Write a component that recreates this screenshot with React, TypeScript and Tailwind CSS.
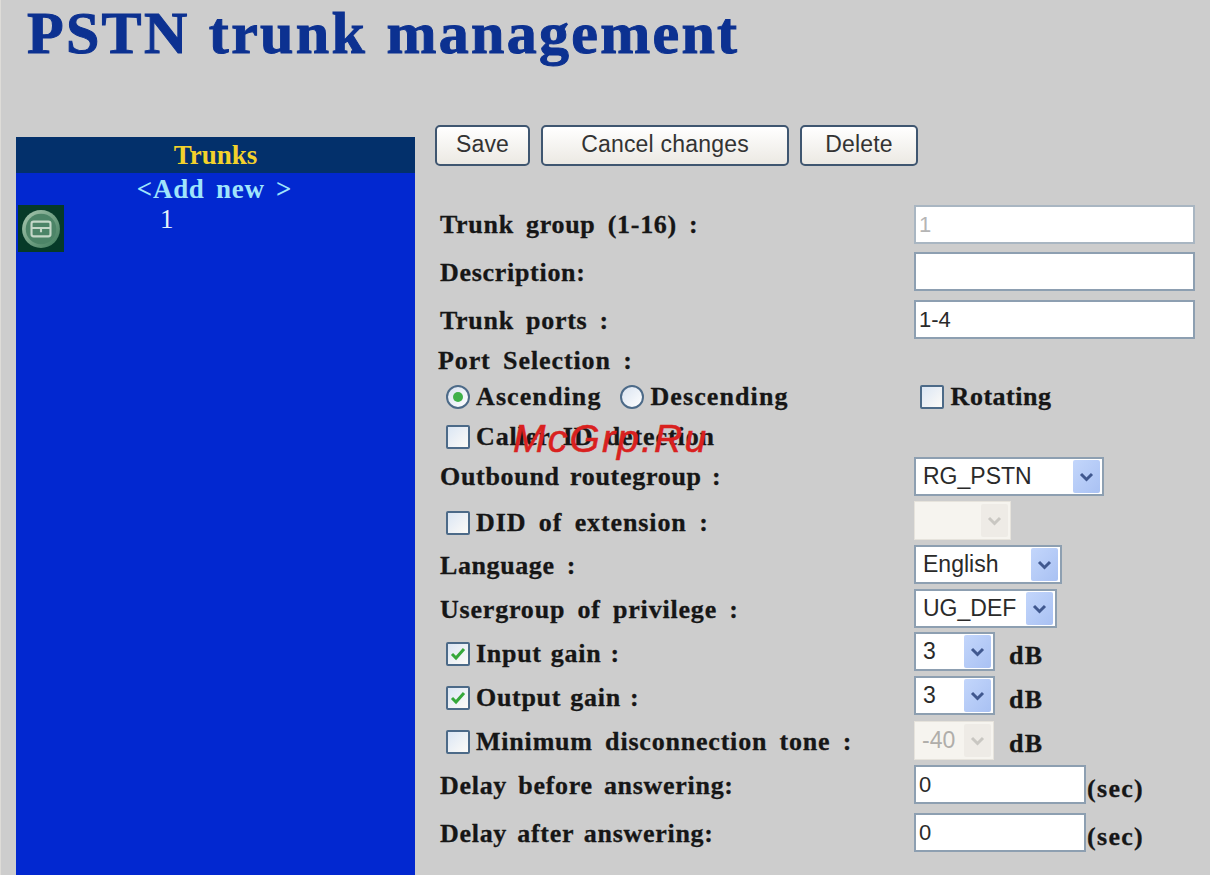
import React from "react";

const serif = "font-['Liberation_Serif',serif]";
const sans = "font-['Liberation_Sans',sans-serif]";
const base = `${serif} font-bold text-[26px] leading-[30px] text-[#161616] [-webkit-text-stroke:0.3px_#161616] whitespace-nowrap`;
const labelCls = `${base} tracking-[0.7px] [word-spacing:5px]`;
const wideCls = `${base} tracking-[1.1px] [word-spacing:5px]`;

function Arrow({ disabled }: { disabled?: boolean }) {
  return (
    <div className={`w-[27px] h-[33px] flex items-center justify-center rounded-[2px] ${disabled ? "bg-[#eeebe6]" : "bg-gradient-to-br from-[#c3d6fb] to-[#a9c1f3]"}`}>
      <svg width="15" height="10" viewBox="0 0 15 10" fill="none">
        <path d="M2 2 L7.5 7.5 L13 2" stroke={disabled ? "#c9c7c2" : "#40588f"} strokeWidth="3" />
      </svg>
    </div>
  );
}

function Select({ text, w, disabled }: { text: string; w: string; disabled?: boolean }) {
  return (
    <div className={`${w} h-[39px] flex items-center justify-between pr-[2px] pl-[7px] ${sans} text-[23px] ${disabled ? "bg-[#f6f4ef] text-[#b0aeaa] border border-[#e6e3dc]" : "bg-white text-[#2a2a2a] border-2 border-[#8d9fb1]"}`}>
      <span>{text}</span>
      <Arrow disabled={disabled} />
    </div>
  );
}

function Check({ checked }: { checked?: boolean }) {
  return (
    <span className="w-[24px] h-[24px] shrink-0 border-2 border-[#4c6a88] rounded-[2px] bg-gradient-to-br from-[#dbe6f4] to-[#fdfbf7] flex items-center justify-center">
      {checked && (
        <svg width="16" height="14" viewBox="0 0 16 14" fill="none">
          <path d="M2 7 L6 11 L14 2" stroke="#35a83a" strokeWidth="3" />
        </svg>
      )}
    </span>
  );
}

function Radio({ checked }: { checked?: boolean }) {
  return (
    <span className="w-[24px] h-[24px] shrink-0 rounded-full border-2 border-[#4c6a88] bg-gradient-to-br from-[#d9e3f0] to-[#ffffff] flex items-center justify-center">
      {checked && <span className="w-[10px] h-[10px] rounded-full bg-[#3fb14a]" />}
    </span>
  );
}

function Row({ h, label, indent, check, checked, children, labelTop = 0, cls }: {
  h: string; label: string; indent?: boolean; check?: boolean; checked?: boolean; children?: React.ReactNode; labelTop?: number; cls?: string;
}) {
  return (
    <div className={`flex items-start ${h}`}>
      <div className={`w-[479px] flex items-center gap-[6px] ${indent ? "pl-[11px]" : "pl-[5px]"}`} style={{ paddingTop: labelTop }}>
        {check && <Check checked={checked} />}
        <span className={cls ?? labelCls}>{label}</span>
      </div>
      {children}
    </div>
  );
}

function TextBox({ value, w, grey }: { value: string; w: string; grey?: boolean }) {
  return (
    <div className={`${w} h-[39px] bg-white border-2 ${grey ? "border-[#a9b6c2] text-[#b5b5b5]" : "border-[#8d9fb1] text-[#2a2a2a]"} pl-[3px] flex items-center ${sans} text-[22px]`}>
      {value}
    </div>
  );
}

function Unit({ t, cls }: { t: string; cls: string }) {
  return <span className={`${base} tracking-[1.3px] ${cls}`}>{t}</span>;
}

function Btn({ t, w }: { t: string; w: string }) {
  return (
    <button className={`${w} h-[41px] rounded-[5px] border-2 border-[#3f5670] bg-gradient-to-b from-[#ffffff] to-[#ece9e3] ${sans} text-[23px] tracking-[0.2px] text-[#333333] flex items-center justify-center pb-[3px]`}>
      {t}
    </button>
  );
}

export default function App() {
  return (
    <div className="relative w-[1210px] h-[875px] overflow-hidden bg-[#cdcdcd] border-l border-[#dedcd8]">
      <h1 className={`${serif} font-bold text-[60px] leading-[66px] text-[#0c3191] [-webkit-text-stroke:1px_#0c3191] tracking-[2.3px] [word-spacing:2px] pl-[26px] h-[137px] whitespace-nowrap`}>
        PSTN trunk management
      </h1>
      <div className="flex pl-[15px]">
        <aside className="w-[399px] h-[738px] bg-[#0228d0] shrink-0">
          <div className={`h-[36px] bg-[#03306b] text-center ${serif} font-bold text-[27px] leading-[36px] text-[#f3d22b]`}>Trunks</div>
          <div className={`text-center ${serif} font-bold text-[27px] leading-[32px] tracking-[0.7px] [word-spacing:4px] text-[#9fe4fb] pr-[2px]`}>&lt;Add new &gt;</div>
          <div className="flex pl-[2px]">
            <div className="w-[46px] h-[47px] bg-[#063a28] flex items-center justify-center">
              <svg width="40" height="40" viewBox="0 0 38 38">
                <defs>
                  <linearGradient id="g" x1="0" y1="0" x2="1" y2="1">
                    <stop offset="0" stopColor="#a9c8b0" />
                    <stop offset="1" stopColor="#3c7a5a" />
                  </linearGradient>
                </defs>
                <circle cx="19" cy="19" r="18" fill="url(#g)" />
                <circle cx="19" cy="19" r="14.5" fill="#4c8467" />
                <rect x="10" y="12" width="18" height="14" rx="2" fill="none" stroke="#c4d8c8" strokeWidth="2" />
                <path d="M10 18 H28 M19 18 V22" stroke="#c4d8c8" strokeWidth="2" />
              </svg>
            </div>
            <span className={`${serif} text-[27px] leading-[30px] text-[#e4f2fb] pl-[96px] -mt-[1px]`}>1</span>
          </div>
        </aside>

        <main className="pl-[20px] -mt-[12px] flex-1">
          <div className="flex gap-[11px] h-[80px]">
            <Btn t="Save" w="w-[95px]" />
            <Btn t="Cancel changes" w="w-[248px]" />
            <Btn t="Delete" w="w-[118px]" />
          </div>
          <Row h="h-[47px]" label="Trunk group (1-16) :" labelTop={5}><TextBox value="1" w="w-[281px]" grey /></Row>
          <Row h="h-[48px]" label="Description:" labelTop={6}><TextBox value="" w="w-[281px]" /></Row>
          <Row h="h-[46px]" label="Trunk ports :" labelTop={6}><TextBox value="1-4" w="w-[281px]" /></Row>
          <div className="h-[31px] pl-[3px]"><span className={`${base} tracking-[0.9px] [word-spacing:5px]`}>Port Selection :</span></div>
          <div className="h-[40px] flex items-center pl-[11px]">
            <Radio checked />
            <span className={`${wideCls} ml-[6px]`}>Ascending</span>
            <span className="ml-[19px]"><Radio /></span>
            <span className={`${wideCls} ml-[6px]`}>Descending</span>
            <span className="ml-[131px]"><Check /></span>
            <span className={`${base} tracking-[0.5px] ml-[7px]`}>Rotating</span>
          </div>
          <div className="h-[40px] flex items-center pl-[11px] gap-[6px]">
            <Check />
            <span className={`${base} tracking-[0.9px] [word-spacing:5px]`}>Caller ID detection</span>
          </div>
          <Row h="h-[44px]" label="Outbound routegroup :" labelTop={5} cls={`${base} tracking-[0.7px] [word-spacing:3px]`}><Select text="RG_PSTN" w="w-[190px]" /></Row>
          <Row h="h-[44px]" label="DID of extension :" indent check labelTop={7} cls={`${base} tracking-[0.9px] [word-spacing:5px]`}><Select text="" w="w-[97px]" disabled /></Row>
          <Row h="h-[44px]" label="Language :" labelTop={6} cls={`${base} tracking-[0.6px] [word-spacing:5px]`}><Select text="English" w="w-[148px]" /></Row>
          <Row h="h-[43px]" label="Usergroup of privilege :" labelTop={6} cls={`${base} tracking-[0.8px] [word-spacing:5px]`}><Select text="UG_DEF" w="w-[143px]" /></Row>
          <Row h="h-[44px]" label="Input gain :" indent check checked labelTop={7} cls={`${base} tracking-[0.7px] [word-spacing:2px]`}>
            <Select text="3" w="w-[81px]" /><Unit t="dB" cls="ml-[14px] mt-[9px]" />
          </Row>
          <Row h="h-[45px]" label="Output gain :" indent check checked labelTop={7} cls={`${base} tracking-[0.7px] [word-spacing:2px]`}>
            <Select text="3" w="w-[81px]" /><Unit t="dB" cls="ml-[14px] mt-[9px]" />
          </Row>
          <Row h="h-[44px]" label="Minimum disconnection tone :" indent check labelTop={6} cls={`${base} tracking-[0.8px] [word-spacing:5px]`}>
            <Select text="-40" w="w-[80px]" disabled /><Unit t="dB" cls="ml-[15px] mt-[8px]" />
          </Row>
          <Row h="h-[48px]" label="Delay before answering:" labelTop={6} cls={`${base} tracking-[0.7px] [word-spacing:4px]`}>
            <TextBox value="0" w="w-[172px]" /><Unit t="(sec)" cls="ml-[1px] mt-[9px]" />
          </Row>
          <Row h="h-[47px]" label="Delay after answering:" labelTop={6} cls={`${base} tracking-[0.7px] [word-spacing:3px]`}>
            <TextBox value="0" w="w-[172px]" /><Unit t="(sec)" cls="ml-[1px] mt-[9px]" />
          </Row>
        </main>
      </div>
      <div className={`absolute left-[512px] top-[416px] ${sans} italic text-[39px] leading-[46px] tracking-[2.2px] text-[#d9211f] [-webkit-text-stroke:0.5px_#d9211f]`}>McGrp.Ru</div>
    </div>
  );
}
